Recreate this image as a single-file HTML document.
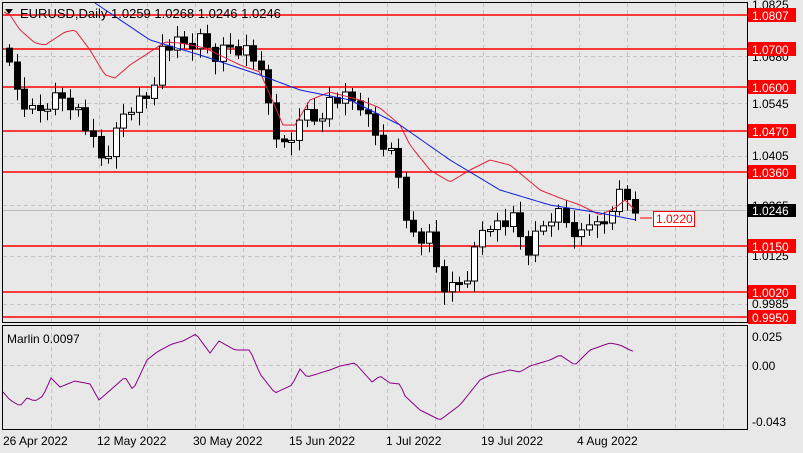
<!DOCTYPE html>
<html><head><meta charset="utf-8"><style>
body{margin:0;background:#e8e8e8;width:803px;height:453px;overflow:hidden;font-family:"Liberation Sans",sans-serif}
svg{display:block}
</style></head><body>
<svg id="s" width="803" height="453" xmlns="http://www.w3.org/2000/svg" font-family="Liberation Sans, sans-serif" font-size="12">
<rect width="803" height="453" fill="#e8e8e8"/>
<g id="grid" stroke="#c4c4c4" stroke-dasharray="4,3" stroke-width="1"></g>
<g id="lines"></g>
<g id="cndl"></g>
<polyline id="red" fill="none" stroke="#e0203c" stroke-width="1"/>
<polyline id="blue" fill="none" stroke="#1020e0" stroke-width="1"/>
<polyline id="mar" fill="none" stroke="#8a008a" stroke-width="1"/>
<rect x="2.5" y="2.5" width="745" height="320" fill="none" stroke="#000"/>
<rect x="2.5" y="325.5" width="745" height="104" fill="none" stroke="#000"/>
<polygon points="5,9 13,9 9,14" fill="#000"/>
<text x="20" y="18" fill="#000" font-size="13">EURUSD,Daily  1.0259 1.0268 1.0246 1.0246</text>
<text x="7" y="343" fill="#000">Marlin 0.0097</text>
<g fill="#000">
<text x="752" y="9">1.0825</text><text x="752" y="61">1.0680</text><text x="752" y="108">1.0545</text>
<text x="752" y="160">1.0405</text><text x="752" y="210">1.0265</text><text x="752" y="260">1.0125</text>
<text x="752" y="308">0.9985</text>
<text x="752" y="341">0.025</text><text x="752" y="370">0.00</text><text x="752" y="426">-0.043</text>
<text x="3" y="445">26 Apr 2022</text><text x="97" y="445">12 May 2022</text><text x="193" y="445">30 May 2022</text>
<text x="289" y="445">15 Jun 2022</text><text x="386" y="445">1 Jul 2022</text><text x="481" y="445">19 Jul 2022</text>
<text x="577" y="445">4 Aug 2022</text>
</g>
<g id="lbl"></g>
<line x1="640" y1="218" x2="652" y2="218" stroke="#f00"/>
<rect x="653.5" y="211.5" width="41" height="15" fill="#fff" stroke="#f00"/>
<text x="656" y="223" fill="#f00">1.0220</text>
<rect x="748" y="204" width="48" height="13" fill="#000"/>
<text x="752" y="215" fill="#fff">1.0246</text>
</svg>
<script>
(function(){
var NS="http://www.w3.org/2000/svg";
function el(p,t,a){var e=document.createElementNS(NS,t);for(var k in a)e.setAttribute(k,a[k]);document.getElementById(p).appendChild(e);return e;}
for(var gx=51;gx<747;gx+=48){el("grid","line",{x1:gx+.5,y1:3,x2:gx+.5,y2:322});el("grid","line",{x1:gx+.5,y1:326,x2:gx+.5,y2:429});}
[56,103,156,205,256,304].forEach(function(y){el("grid","line",{x1:3,y1:y+.5,x2:747,y2:y+.5});});
el("grid","line",{x1:3,y1:365.5,x2:747,y2:365.5});
el("lines","line",{x1:3,y1:210.5,x2:747,y2:210.5,stroke:"#bbb"});
[[15,"1.0807"],[49,"1.0700"],[87,"1.0600"],[131,"1.0470"],[172,"1.0360"],[246,"1.0150"],[292,"1.0020"],[317,"0.9950"]].forEach(function(l){
el("lines","line",{x1:3,y1:l[0],x2:747,y2:l[0],stroke:"#ff0000","stroke-width":1.5});
el("lbl","rect",{x:748,y:l[0]-7,width:48,height:14,fill:"#ff0000"});
var t=el("lbl","text",{x:752,y:l[0]+5,fill:"#fff"});t.textContent=l[1];});
function interp(k,x){for(var i=1;i<k.length;i++)if(x<=k[i][0]){var a=k[i-1],b=k[i];return a[1]+(b[1]-a[1])*(x-a[0])/(b[0]-a[0]);}return k[k.length-1][1];}
function pl(id,k){var p=[];for(var x=k[0][0];x<=k[k.length-1][0];x+=3)p.push(x+","+interp(k,x).toFixed(1));document.getElementById(id).setAttribute("points",p.join(" "));}
var C=[[9,70],[20,100],[35,115],[50,100],[60,95],[75,105],[100,160],[110,150],[125,110],[140,100],[150,95],[160,50],[175,45],[190,45],[200,40],[215,55],[230,45],[250,50],[260,75],[270,110],[280,150],[290,145],[300,110],[315,120],[330,100],[345,100],[360,105],[375,135],[385,145],[395,160],[405,210],[415,240],[430,240],[440,285],[450,290],[465,280],[475,250],[485,220],[500,225],[515,220],[525,255],[540,230],[555,210],[565,220],[580,235],[590,220],[600,235],[610,210],[618,195],[628,200],[636,208]];
var prev=interp(C,1);
for(var i=0;i<83;i++){var x=9+i*7.63;var c=interp(C,x)+((i*37)%11-5)*1.6;var o=prev;prev=c;
var t0=Math.min(o,c),b0=Math.max(o,c);if(b0-t0<2)b0=t0+2;var up=c<o;var rx=Math.round(x);
el("cndl","line",{x1:rx+.5,y1:t0-4-(i*13)%9,x2:rx+.5,y2:b0+4+(i*7)%10,stroke:"#000"});
el("cndl","rect",{x:rx-2.5,y:t0,width:6,height:b0-t0,fill:up?"#fff":"#000",stroke:"#000"});}
pl("red",[[4,12],[10,15],[20,30],[35,43],[45,45],[65,32],[75,30],[90,50],[105,75],[115,78],[130,65],[150,52],[165,42],[180,43],[205,48],[240,65],[260,72],[270,95],[283,125],[295,125],[310,100],[330,92],[360,100],[380,108],[400,125],[410,145],[430,170],[450,182],[470,170],[490,160],[510,165],[540,190],[560,198],[580,205],[600,215],[615,208],[625,200],[635,210]]);
pl("blue",[[95,3],[150,40],[200,55],[260,75],[300,90],[350,100],[400,125],[450,160],[500,190],[550,205],[600,213],[636,220]]);
pl("mar",[[3,392],[10,400],[20,406],[27,398],[35,401],[43,396],[51,378],[60,387],[75,381],[90,384],[99,400],[115,386],[125,377],[133,390],[147,360],[157,352],[172,344],[183,341],[196,334],[210,353],[219,341],[235,350],[250,350],[260,374],[275,393],[292,385],[300,369],[307,377],[330,370],[340,366],[355,363],[372,382],[380,376],[390,383],[400,384],[405,396],[420,410],[440,420],[460,405],[480,380],[490,375],[510,370],[520,372],[530,366],[550,360],[560,355],[575,365],[590,350],[610,343],[620,345],[630,350],[635,352]]);
})();
</script>
</body></html>
